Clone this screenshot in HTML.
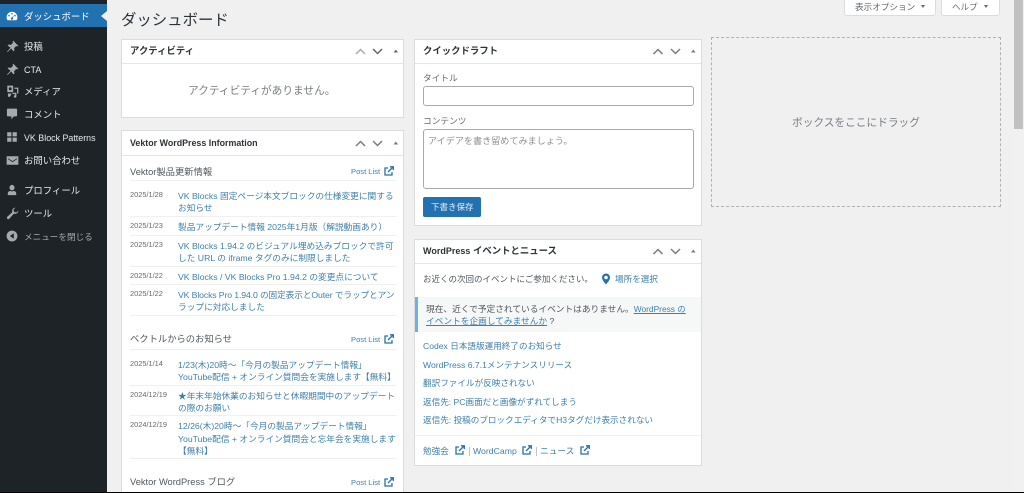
<!DOCTYPE html>
<html lang="ja"><head><meta charset="utf-8"><title>ダッシュボード</title>
<style>
html,body{margin:0;padding:0;width:1024px;height:493px;overflow:hidden;background:#f0f0f1}
body{position:relative;font-family:"Liberation Sans","Noto Sans CJK JP",sans-serif;font-size:8.7px;color:#50575e}
#w{position:absolute;left:0;top:0;width:1024px;height:493px;overflow:hidden;filter:blur(.3px)}
.t{position:absolute;white-space:nowrap;line-height:14px;height:14px;margin-top:2px}
.a{position:absolute}
.m{color:#e8e9ea;left:24px;font-size:9.4px}
.d{color:#646970;left:130px;font-size:7.4px}
.l{color:#3f80aa;left:178px;font-size:8.7px}
.n{color:#3f80aa;left:423px;font-size:8.6px}
.h{font-weight:bold;color:#2c3338;font-size:9.4px}
.s{font-size:9.3px;color:#50575e;left:130px}
.p{font-size:7.6px;color:#3f80aa;left:351px}
.box{position:absolute;background:#fff;border:1px solid #dcdcde;box-sizing:border-box}
.hr{position:absolute;height:1px;background:#f0f0f1}
svg{position:absolute;display:block}
</style></head><body><div id="w">
<div class="a" style="left:0;top:0;width:107px;height:493px;background:#1d2327"></div>
<div class="a" style="left:0;top:4px;width:107px;height:23px;background:#2271b1"></div>
<div class="a" style="left:101px;top:11px;border:5px solid transparent;border-left:0;border-right:6px solid #f0f0f1"></div>
<svg style="left:6px;top:10px" width="12" height="12" viewBox="0 0 20 20"><path fill="#fff" d="M10 3a9 9 0 0 0-9 9c0 2 .6 3.6 1.600 5h14.800c1-1.400 1.600-3 1.600-5a9 9 0 0 0-9-9zm0 2a1.300 1.300 0 1 1 0 2.600A1.300 1.300 0 0 1 10 5zM5 8a1.300 1.300 0 1 1 0 2.600A1.300 1.300 0 0 1 5 8zm10 0a1.300 1.300 0 1 1 0 2.600A1.300 1.300 0 0 1 15 8zm-1.500 .5-2.200 4.700a1.800 1.800 0 1 1-1.600-.6z"/></svg>
<svg style="left:6px;top:40px" width="13" height="13" viewBox="0 0 20 20"><path fill="#a7aaad" d="M11 1l8 8-2 1-1-1-3.500 3.500.5 3.500-1.500 1.500L8 13l-5.500 5.500L1.500 18 7 12 2.500 8.500 4 7l3.500.5L11 4l-1-1z"/></svg>
<svg style="left:6px;top:63px" width="13" height="13" viewBox="0 0 20 20"><path fill="#a7aaad" d="M11 1l8 8-2 1-1-1-3.500 3.500.5 3.500-1.500 1.500L8 13l-5.500 5.500L1.500 18 7 12 2.500 8.500 4 7l3.500.5L11 4l-1-1z"/></svg>
<svg style="left:6px;top:85px" width="13" height="13" viewBox="0 0 20 20"><path fill="#a7aaad" fill-rule="evenodd" d="M2 1h9v10H2zM6.500 3.500a2.200 2.200 0 1 0 0 4.400 2.200 2.200 0 0 0 0-4.400zM13 4h6v9h-2V6h-4zM10 12h6v5.500a2 2 0 1 1-2-2v-1.500h-4zM3 13h5v2l-2 3H3z"/></svg>
<svg style="left:6px;top:108px" width="12" height="12" viewBox="0 0 20 20"><path fill="#a7aaad" d="M3 1h14a1.500 1.500 0 0 1 1.500 1.500v10A1.500 1.500 0 0 1 17 14h-4l-4 5v-5H3a1.500 1.500 0 0 1-1.500-1.500v-10A1.500 1.500 0 0 1 3 1z"/></svg>
<svg style="left:6px;top:131px" width="12" height="12" viewBox="0 0 20 20"><path fill="#a7aaad" d="M2 2h7v7H2zM11 2h7v7h-7zM2 11h7v7H2zM11 11h7v7h-7z"/></svg>
<svg style="left:6px;top:154px" width="13" height="13" viewBox="0 0 20 20"><path fill="#a7aaad" d="M1 3.500h18v13H1zM3 6.500v1.300l7 4.700 7-4.700V6.500l-7 4.500z" fill-rule="evenodd"/></svg>
<svg style="left:6px;top:184px" width="12" height="12" viewBox="0 0 20 20"><path fill="#a7aaad" d="M10 1.500a4.200 4.200 0 0 1 4.200 4.500c0 2.400-1.700 4.500-4.200 4.500S5.800 8.400 5.800 6A4.200 4.200 0 0 1 10 1.500zM3 18.500v-3c0-2 1.500-3.500 4-4 1.800 1 4.200 1 6 0 2.500.5 4 2 4 4v3z"/></svg>
<svg style="left:6px;top:207px" width="13" height="13" viewBox="0 0 20 20"><path fill="#a7aaad" d="M19 5.500a5 5 0 0 1-6.800 4.700L5 18a2 2 0 0 1-3-3l7.800-7.200A5 5 0 0 1 14.500 1l-3 3 1 3.500 3.500 1 3-3z"/></svg>
<svg style="left:6px;top:230px" width="12" height="12" viewBox="0 0 20 20"><circle cx="10" cy="10" r="9" fill="#a7aaad"/><path fill="#1d2327" d="M13 5.500v9L6.500 10z"/></svg>
<div class="t m" style="top:7.500px;color:#fff">ダッシュボード</div>
<div class="t m" style="top:38px">投稿</div>
<div class="t m" style="top:61px;font-size:9px">CTA</div>
<div class="t m" style="top:83px">メディア</div>
<div class="t m" style="top:106px">コメント</div>
<div class="t m" style="top:129px;font-size:8.900px">VK Block Patterns</div>
<div class="t m" style="top:152px">お問い合わせ</div>
<div class="t m" style="top:182px">プロフィール</div>
<div class="t m" style="top:205px">ツール</div>
<div class="t m" style="top:228px;color:#a7aaad;font-size:8.600px">メニューを閉じる</div>

<div class="t" style="left:121px;top:9px;height:20px;line-height:20px;font-size:15.400px;color:#2c3338">ダッシュボード</div>

<div class="box" style="left:844px;top:-2px;width:92px;height:18px;border-radius:0 0 3px 3px"></div>
<div class="t" style="left:855px;top:-2px;color:#646970;font-size:8.600px">表示オプション</div>
<div class="a" style="left:921px;top:5px;border:2.500px solid transparent;border-bottom:0;border-top:3.500px solid #646970"></div>
<div class="box" style="left:941px;top:-2px;width:59px;height:18px;border-radius:0 0 3px 3px"></div>
<div class="t" style="left:952px;top:-2px;color:#646970;font-size:8.500px">ヘルプ</div>
<div class="a" style="left:984px;top:5px;border:2.500px solid transparent;border-bottom:0;border-top:3.500px solid #646970"></div>

<!-- Activity -->
<div class="box" style="left:121px;top:39px;width:283px;height:79px"></div>
<div class="hr" style="left:122px;top:63px;width:281px;background:#e3e4e6"></div>
<div class="t h" style="left:130px;top:42px">アクティビティ</div>
<div class="t" style="left:188px;top:82px;color:#787c82;font-size:10.700px">アクティビティがありません。</div>
<svg style="left:354px;top:46px" width="46" height="10" viewBox="0 0 46 10"><path fill="none" stroke="#a7aaad" stroke-width="1.500" d="M2 8l4.500-4.500L11 8"/><path fill="none" stroke="#646970" stroke-width="1.500" d="M19 3l4.500 4.500L28 3"/><path fill="#646970" d="M39.500 6.500l2.300-3 2.300 3z"/></svg>

<!-- Vektor -->
<div class="box" style="left:121px;top:130px;width:283px;height:370px"></div>
<div class="hr" style="left:122px;top:155px;width:281px;background:#e3e4e6"></div>
<div class="t h" style="left:130px;top:134px;font-size:8.900px">Vektor WordPress Information</div>
<svg style="left:354px;top:138px" width="46" height="10" viewBox="0 0 46 10"><path fill="none" stroke="#787c82" stroke-width="1.500" d="M2 8l4.500-4.500L11 8"/><path fill="none" stroke="#787c82" stroke-width="1.500" d="M19 3l4.500 4.500L28 3"/><path fill="#787c82" d="M39.500 6.500l2.300-3 2.300 3z"/></svg>

<div class="t s" style="top:163px">Vektor製品更新情報</div>
<div class="t p" style="top:163px">Post List</div>
<svg style="left:384px;top:166px" width="10" height="10" viewBox="0 0 10 10"><path fill="none" stroke="#2271b1" stroke-width="1.300" d="M4 2H1v7h7V6M4 6l5-5M6 .8h3.300v3.200"/></svg>
<div class="hr" style="left:130px;top:180px;width:266px"></div>
<div class="t d" style="top:186px">2025/1/28</div>
<div class="t l" style="top:187px">VK Blocks 固定ページ本文ブロックの仕様変更に関する</div>
<div class="t l" style="top:199px">お知らせ</div>
<div class="hr" style="left:130px;top:216px;width:266px"></div>
<div class="t d" style="top:217px">2025/1/23</div>
<div class="t l" style="top:218px">製品アップデート情報 2025年1月版（解説動画あり）</div>
<div class="hr" style="left:130px;top:235px;width:266px"></div>
<div class="t d" style="top:236px">2025/1/23</div>
<div class="t l" style="top:237px">VK Blocks 1.94.2 のビジュアル埋め込みブロックで許可</div>
<div class="t l" style="top:249px">した URL の iframe タグのみに制限しました</div>
<div class="hr" style="left:130px;top:266px;width:266px"></div>
<div class="t d" style="top:267px">2025/1/22</div>
<div class="t l" style="top:268px">VK Blocks / VK Blocks Pro 1.94.2 の変更点について</div>
<div class="hr" style="left:130px;top:284px;width:266px"></div>
<div class="t d" style="top:285px">2025/1/22</div>
<div class="t l" style="top:286px;letter-spacing:-.12px">VK Blocks Pro 1.94.0 の固定表示とOuter でラップとアン</div>
<div class="t l" style="top:298px">ラップに対応しました</div>
<div class="hr" style="left:130px;top:315px;width:266px"></div>

<div class="t s" style="top:330px">ベクトルからのお知らせ</div>
<div class="t p" style="top:331px">Post List</div>
<svg style="left:384px;top:334px" width="10" height="10" viewBox="0 0 10 10"><path fill="none" stroke="#2271b1" stroke-width="1.300" d="M4 2H1v7h7V6M4 6l5-5M6 .8h3.300v3.200"/></svg>
<div class="hr" style="left:130px;top:349px;width:266px"></div>
<div class="t d" style="top:355px">2025/1/14</div>
<div class="t l" style="top:356px">1/23(木)20時～「今月の製品アップデート情報」</div>
<div class="t l" style="top:368px">YouTube配信 + オンライン質問会を実施します【無料】</div>
<div class="hr" style="left:130px;top:385px;width:266px"></div>
<div class="t d" style="top:386px">2024/12/19</div>
<div class="t l" style="top:387px">★年末年始休業のお知らせと休暇期間中のアップデート</div>
<div class="t l" style="top:399px">の際のお願い</div>
<div class="hr" style="left:130px;top:415px;width:266px"></div>
<div class="t d" style="top:416px">2024/12/19</div>
<div class="t l" style="top:417px">12/26(木)20時～「今月の製品アップデート情報」</div>
<div class="t l" style="top:430px">YouTube配信 + オンライン質問会と忘年会を実施します</div>
<div class="t l" style="top:442px">【無料】</div>
<div class="hr" style="left:130px;top:458px;width:266px"></div>
<div class="t s" style="top:473px">Vektor WordPress ブログ</div>
<div class="t p" style="top:474px">Post List</div>
<svg style="left:384px;top:477px" width="10" height="10" viewBox="0 0 10 10"><path fill="none" stroke="#2271b1" stroke-width="1.300" d="M4 2H1v7h7V6M4 6l5-5M6 .8h3.300v3.200"/></svg>

<!-- Quick draft -->
<div class="box" style="left:414px;top:39px;width:288px;height:187px"></div>
<div class="hr" style="left:415px;top:63px;width:286px;background:#e3e4e6"></div>
<div class="t h" style="left:423px;top:42px">クイックドラフト</div>
<svg style="left:652px;top:46px" width="46" height="10" viewBox="0 0 46 10"><path fill="none" stroke="#787c82" stroke-width="1.500" d="M1.500 8l4.500-4.500L10.500 8"/><path fill="none" stroke="#787c82" stroke-width="1.500" d="M19 3l4.500 4.500L28 3"/><path fill="#787c82" d="M39 6.500l2.300-3 2.300 3z"/></svg>
<div class="t" style="left:423px;top:69px;color:#646970">タイトル</div>
<div class="a" style="left:423px;top:86px;width:271px;height:20px;box-sizing:border-box;border:1px solid #a7aaad;border-radius:3px;background:#fff"></div>
<div class="t" style="left:423px;top:112px;color:#646970">コンテンツ</div>
<div class="a" style="left:423px;top:129px;width:271px;height:60px;box-sizing:border-box;border:1px solid #a7aaad;border-radius:3px;background:#fff"></div>
<div class="t" style="left:428px;top:132px;color:#8c8f94;font-size:9.100px">アイデアを書き留めてみましょう。</div>
<div class="a" style="left:423px;top:197px;width:58px;height:20px;background:#2271b1;border-radius:2px"></div>
<div class="t" style="left:431px;top:198px;color:#e8f0f6;font-size:8.500px">下書き保存</div>

<!-- Events -->
<div class="box" style="left:414px;top:239px;width:288px;height:227px"></div>
<div class="hr" style="left:415px;top:263px;width:286px;background:#e3e4e6"></div>
<div class="t h" style="left:423px;top:242px"><span style="font-size:9px">WordPress</span> イベントとニュース</div>
<svg style="left:652px;top:246px" width="46" height="10" viewBox="0 0 46 10"><path fill="none" stroke="#787c82" stroke-width="1.500" d="M1.500 8l4.500-4.500L10.500 8"/><path fill="none" stroke="#787c82" stroke-width="1.500" d="M19 3l4.500 4.500L28 3"/><path fill="#787c82" d="M39 6.500l2.300-3 2.300 3z"/></svg>
<div class="t" style="left:423px;top:270px;font-size:8.500px">お近くの次回のイベントにご参加ください。</div>
<svg style="left:601px;top:273px" width="10" height="12" viewBox="0 0 10 12"><path fill="#2271b1" fill-rule="evenodd" d="M5 .5a4 4 0 0 1 4 4c0 2.500-2.500 5-4 7-1.500-2-4-4.500-4-7a4 4 0 0 1 4-4zm0 2.200a1.800 1.800 0 1 0 0 3.600 1.800 1.800 0 0 0 0-3.600z"/></svg>
<div class="t" style="left:615px;top:270px;color:#3f80aa;font-size:8.600px">場所を選択</div>
<div class="a" style="left:415px;top:297px;width:286px;height:35px;background:#f6f7f7"></div>
<div class="a" style="left:415px;top:297px;width:3px;height:35px;background:#72aee6"></div>
<div class="t" style="left:426px;top:300px">現在、近くで予定されているイベントはありません。<span style="color:#3f80aa;text-decoration:underline;font-size:8.400px">WordPress の</span></div>
<div class="t" style="left:426px;top:312px"><span style="color:#3f80aa;text-decoration:underline">イベントを企画してみませんか</span> ?</div>
<div class="t n" style="top:337px">Codex 日本語版運用終了のお知らせ</div>
<div class="t n" style="top:356px">WordPress 6.7.1メンテナンスリリース</div>
<div class="t n" style="top:374px">翻訳ファイルが反映されない</div>
<div class="t n" style="top:393px">返信先: PC画面だと画像がずれてしまう</div>
<div class="t n" style="top:411px">返信先: 投稿のブロックエディタでH3タグだけ表示されない</div>
<div class="hr" style="left:415px;top:435px;width:286px"></div>
<div class="t n" style="top:442px">勉強会</div>
<svg style="left:455px;top:445px" width="10" height="10" viewBox="0 0 10 10"><path fill="none" stroke="#2271b1" stroke-width="1.300" d="M4 2H1v7h7V6M4 6l5-5M6 .8h3.300v3.200"/></svg>
<div class="a" style="left:469px;top:447px;width:1px;height:9px;background:#c3c4c7"></div>
<div class="t n" style="top:442px;left:473px;font-size:8.700px">WordCamp</div>
<svg style="left:522px;top:445px" width="10" height="10" viewBox="0 0 10 10"><path fill="none" stroke="#2271b1" stroke-width="1.300" d="M4 2H1v7h7V6M4 6l5-5M6 .8h3.300v3.200"/></svg>
<div class="a" style="left:536px;top:447px;width:1px;height:9px;background:#c3c4c7"></div>
<div class="t n" style="top:442px;left:540px;font-size:8.700px">ニュース</div>
<svg style="left:580px;top:445px" width="10" height="10" viewBox="0 0 10 10"><path fill="none" stroke="#2271b1" stroke-width="1.300" d="M4 2H1v7h7V6M4 6l5-5M6 .8h3.300v3.200"/></svg>

<!-- Drop zone -->
<div class="a" style="left:711px;top:37px;width:290px;height:170px;box-sizing:border-box;border:1px dashed #b0b2b5"></div>
<div class="t" style="left:792px;top:114px;color:#787c82;font-size:10.700px">ボックスをここにドラッグ</div>

<!-- Scrollbar -->
<div class="a" style="left:1014px;top:0;width:10px;height:493px;background:#f1f1f1"></div>
<div class="a" style="left:1014px;top:0;width:9px;height:129px;background:#c1c1c1"></div>
<div class="a" style="left:0;top:492px;width:1024px;height:1px;background:#000"></div>
</div></body></html>
